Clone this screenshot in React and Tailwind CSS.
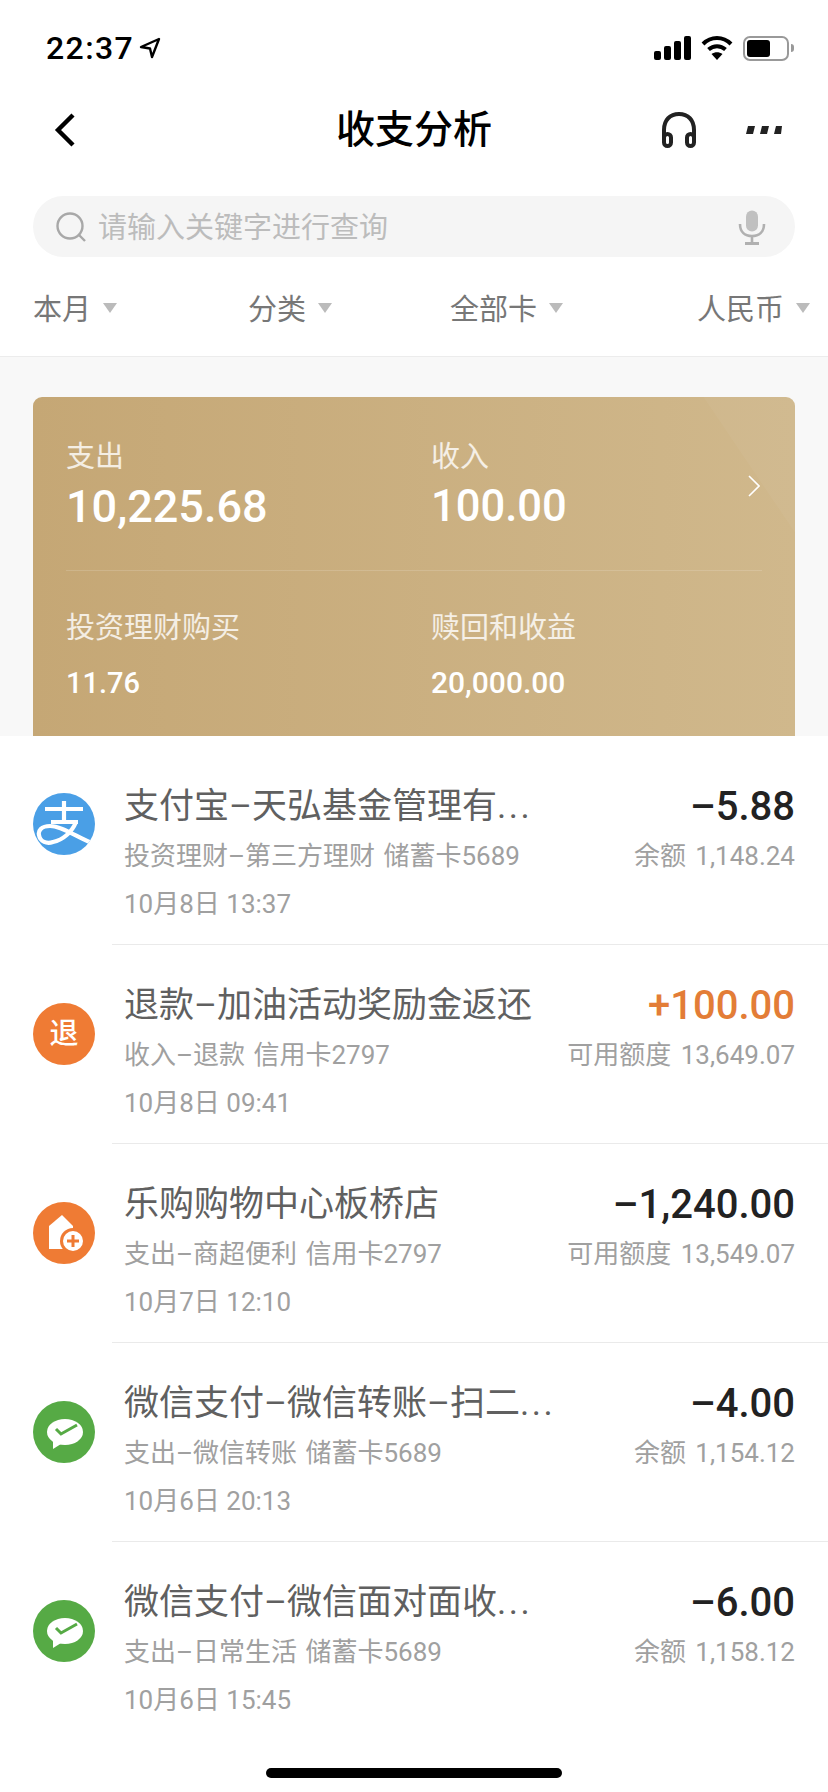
const rows = [
  { icon: 'alipay', title: '支付宝–天弘基金管理有', more: true, sub: '投资理财–第三方理财 储蓄卡5689', date: '10月8日 13:37', amount: '–5.88', balance: '余额 1,148.24' },
  { icon: 'refund', title: '退款–加油活动奖励金返还', sub: '收入–退款 信用卡2797', date: '10月8日 09:41', amount: '+100.00', balance: '可用额度 13,649.07', income: true },
  { icon: 'home', title: '乐购购物中心板桥店', sub: '支出–商超便利 信用卡2797', date: '10月7日 12:10', amount: '–1,240.00', balance: '可用额度 13,549.07' },
  { icon: 'wechat', title: '微信支付–微信转账–扫二', more: true, sub: '支出–微信转账 储蓄卡5689', date: '10月6日 20:13', amount: '–4.00', balance: '余额 1,154.12' },
  { icon: 'wechat', title: '微信支付–微信面对面收', more: true, sub: '支出–日常生活 储蓄卡5689', date: '10月6日 15:45', amount: '–6.00', balance: '余额 1,158.12' },
];

function RowIcon({ type }) {
  if (type === 'refund') {
    return (
      <div className="w-[62px] h-[62px] rounded-full bg-[#ef7b34] flex items-center justify-center text-white text-[29px] leading-none font-medium">
        退
      </div>
    );
  }
  if (type === 'alipay') {
    return (
      <svg width="62" height="62" viewBox="0 0 62 62" className="block">
        <defs>
          <clipPath id="alipay-clip"><circle cx="31" cy="31" r="31" /></clipPath>
        </defs>
        <circle cx="31" cy="31" r="31" fill="#4a9fe6" />
        <g fill="none" stroke="#fff" strokeWidth="4.2" clipPath="url(#alipay-clip)">
          <path d="M12 16H50M31 8V30M18 29H45" />
          <path d="M64 52C46 46 30 33 17 33C8 33 5 38 6 42C7 49 14 51 20 49C30 47 39 39 43 29" />
        </g>
      </svg>
    );
  }
  if (type === 'home') {
    return (
      <svg width="62" height="62" viewBox="0 0 62 62" className="block">
        <circle cx="31" cy="31" r="31" fill="#ef7b34" />
        <path d="M29 13L16 24V47H40V24Z" fill="#fff" />
        <circle cx="40" cy="39" r="13" fill="#ef7b34" />
        <circle cx="40" cy="39" r="10" fill="#fff" />
        <path d="M40 33V45M34 39H46" stroke="#ef7b34" strokeWidth="3" />
      </svg>
    );
  }
  return (
    <svg width="62" height="62" viewBox="0 0 62 62" className="block">
      <circle cx="31" cy="31" r="31" fill="#56aa45" />
      <ellipse cx="32" cy="31" rx="18" ry="13" fill="#fff" />
      <path d="M20 40L20 48L28 43Z" fill="#fff" />
      <path d="M23 28L28 33L44 24" fill="none" stroke="#56aa45" strokeWidth="3" />
    </svg>
  );
}

function Filter({ label }) {
  return (
    <div className="flex items-center gap-[12px]">
      <span className="text-[29px] leading-[40px] text-[#777] relative top-[2px]">{label}</span>
      <svg width="14" height="10" viewBox="0 0 14 10"><path d="M0 0H14L7 10Z" fill="#bbb" /></svg>
    </div>
  );
}

function Row({ row, first, last }) {
  return (
    <div className={`flex pl-[33px] ${first ? 'pt-[10px]' : ''}`}>
      <div className={`shrink-0 ${first ? 'mt-[47px]' : 'mt-[58px]'}`}>
        <RowIcon type={row.icon} />
      </div>
      <div className={`ml-[17px] flex-1 pl-[12px] pr-[33px] pt-[39px] pb-[22px] ${last ? '' : 'border-b border-[#eaeaea]'}`}>
        <div className="flex justify-between items-center h-[44px]">
          <span className="text-[35px] text-[#606060] whitespace-nowrap">
            {row.title}
            {row.more && <span className="tracking-[2.5px]">...</span>}
          </span>
          <span className={`text-[40px] font-medium whitespace-nowrap ${row.income ? 'text-[#e37d37]' : 'text-[#222]'}`}>{row.amount}</span>
        </div>
        <div className="flex justify-between items-center h-[36px] mt-[9px] text-[26px] text-[#a0a0a0] whitespace-nowrap">
          <span className="[word-spacing:2px]">{row.sub}</span>
          <span className="[word-spacing:3px]">{row.balance}</span>
        </div>
        <div className="h-[36px] leading-[36px] mt-[12px] text-[26px] text-[#a0a0a0]">{row.date}</div>
      </div>
    </div>
  );
}

export default function App() {
  return (
    <div className="w-[828px] h-[1792px] overflow-hidden bg-white font-['Roboto','Noto_Sans_CJK_SC',sans-serif]">
      {/* status bar */}
      <div className="h-[96px] flex items-center justify-between pl-[46px] pr-[34px]">
        <div className="flex items-center gap-[5px]">
          <span className="text-[32px] leading-none font-medium text-black tracking-[1.4px]">22:37</span>
          <svg width="22" height="22" viewBox="0 0 22 22">
            <path d="M20 2L2 10L11 11.5L13 20Z" fill="none" stroke="#000" strokeWidth="2.4" strokeLinejoin="round" />
          </svg>
        </div>
        <div className="flex items-center gap-[10px]">
          <svg width="37" height="24" viewBox="0 0 37 24" fill="#000">
            <rect x="0" y="15" width="7" height="9" rx="2" />
            <rect x="10" y="10" width="7" height="14" rx="2" />
            <rect x="20" y="5" width="7" height="19" rx="2" />
            <rect x="30" y="0" width="7" height="24" rx="2" />
          </svg>
          <svg width="32" height="24" viewBox="0 0 32 24" fill="none" stroke="#000" strokeWidth="4">
            <path d="M2 8C10 0 22 0 30 8" />
            <path d="M7.5 13.5C12.5 9 19.5 9 24.5 13.5" />
            <path d="M16 24L10.5 18C14 15.5 18 15.5 21.5 18Z" fill="#000" stroke="none" />
          </svg>
          <div className="flex items-center gap-[2px]">
            <div className="w-[46px] h-[25px] rounded-[7px] border-2 border-[#999] p-[2px]">
              <div className="w-[23px] h-full rounded-[3px] bg-black" />
            </div>
            <div className="w-[3px] h-[8px] rounded-r-full bg-[#999]" />
          </div>
        </div>
      </div>

      {/* nav */}
      <div className="h-[68px] grid grid-cols-[1fr_auto_1fr] items-center px-[46px]">
        <svg width="22" height="34" viewBox="0 0 22 34" fill="none" stroke="#000" strokeWidth="4.4" className="ml-[8px]">
          <path d="M19 2L4 17L19 32" />
        </svg>
        <div className="text-[39px] leading-none font-medium text-black">收支分析</div>
        <div className="flex items-center justify-end gap-[49px]">
          <svg width="36" height="36" viewBox="0 0 36 36" fill="none" stroke="#222" strokeWidth="4">
            <path d="M3 26V18C3 8 9 2 18 2S33 8 33 18V26" />
            <rect x="3" y="22" width="7" height="12" rx="3.5" />
            <rect x="26" y="22" width="7" height="12" rx="3.5" />
          </svg>
          <svg width="36" height="8" viewBox="0 0 36 8" fill="#222">
            <path d="M2 0H9L7 8H0ZM16 0H23L21 8H14ZM30 0H36L35 8H28Z" />
          </svg>
        </div>
      </div>

      {/* search */}
      <div className="mt-[32px] mx-[33px] h-[61px] rounded-full bg-[#f5f5f5] flex items-center pl-[23px] pr-[29px]">
        <svg width="30" height="30" viewBox="0 0 30 30" fill="none" stroke="#a8a8a8" strokeWidth="2.4">
          <circle cx="14" cy="14" r="12.5" />
          <path d="M23 23L29 29" />
        </svg>
        <span className="ml-[12px] flex-1 text-[29px] text-[#bcbcbc] relative top-[2px]">请输入关键字进行查询</span>
        <svg width="28" height="36" viewBox="0 0 28 36" fill="none" stroke="#b0b0b0" strokeWidth="2.6">
          <rect x="8" y="1.5" width="12" height="21" rx="6" fill="#c0c0c0" stroke="none" />
          <path d="M2 15C2 23 7 27 14 27S26 23 26 15M14 27V33" />
          <path d="M7 34.5H21" strokeWidth="3" />
        </svg>
      </div>

      {/* filters */}
      <div className="mt-[31px] pb-[28px] pl-[33px] border-b border-[#ececec] grid grid-cols-[215px_202px_247px_auto]">
        <Filter label="本月" />
        <Filter label="分类" />
        <Filter label="全部卡" />
        <Filter label="人民币" />
      </div>

      {/* summary card */}
      <div className="bg-[#f8f8f8] pt-[40px] px-[33px]">
        <div className="relative h-[339px] rounded-t-[9px] overflow-hidden bg-gradient-to-r from-[#c5a775] to-[#d0b88c] pt-[42px] px-[33px] text-white">
          <div className="absolute inset-0 bg-white/[0.04] [clip-path:polygon(88%_0,100%_0,100%_40%)]" />
          <div className="relative flex items-center">
            <div className="w-[365px]">
              <div className="text-[29px] leading-[36px] text-white/80">支出</div>
              <div className="mt-[6px] text-[45px] leading-[52px] font-medium">10,225.68</div>
            </div>
            <div className="flex-1">
              <div className="text-[29px] leading-[36px] text-white/80">收入</div>
              <div className="mt-[6px] text-[43.5px] leading-[52px] font-medium">100.00</div>
            </div>
            <svg width="12" height="22" viewBox="0 0 12 22" fill="none" stroke="#fff" strokeWidth="1.6" className="mr-[2px]">
              <path d="M1 1L11 11L1 21" />
            </svg>
          </div>
          <div className="relative mt-[37px] h-px bg-white/15" />
          <div className="relative mt-[39px] flex">
            <div className="w-[365px]">
              <div className="text-[29px] leading-[36px] text-white/80">投资理财购买</div>
              <div className="mt-[19px] text-[29px] leading-[36px] font-medium">11.76</div>
            </div>
            <div className="flex-1">
              <div className="text-[29px] leading-[36px] text-white/80">赎回和收益</div>
              <div className="mt-[19px] text-[30px] leading-[36px] font-medium">20,000.00</div>
            </div>
          </div>
        </div>
      </div>

      {/* list */}
      <div className="bg-white">
        {rows.map((row, i) => (
          <Row key={i} row={row} first={i === 0} last={i === rows.length - 1} />
        ))}
      </div>

      {/* home indicator */}
      <div className="mt-[28px] mx-auto w-[296px] h-[10px] rounded-full bg-black" />
    </div>
  );
}
